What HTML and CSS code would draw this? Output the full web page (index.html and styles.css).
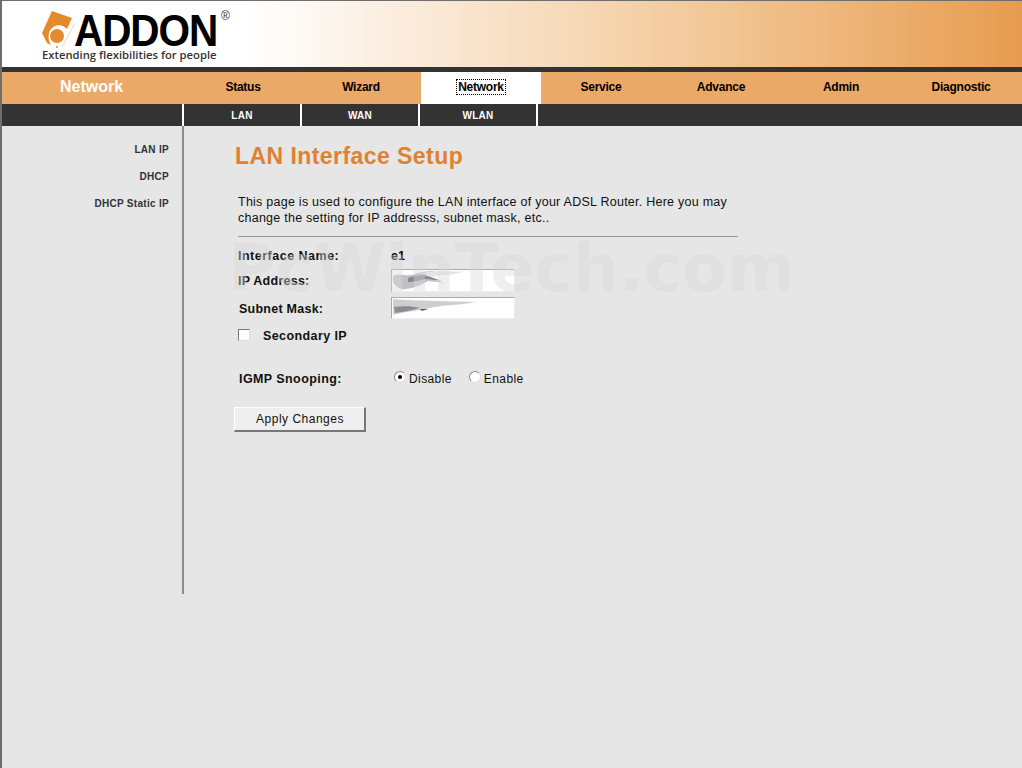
FILE: index.html
```html
<!DOCTYPE html>
<html lang="en">
<head>
<meta charset="utf-8">
<title>LAN Interface Setup</title>
<link rel="stylesheet" href="styles.css">
</head>
<body>
<div class="page">
  <header class="banner">
    <div class="logo">
      <svg class="logo-mark" width="38" height="42" viewBox="40 8 38 42">
        <path d="M52 11 L72 18 L67 29 C62 23 52 24 49 33 C48 38 49 42 51 45 L47 43 L42 33 Z" fill="#e48a2c"/>
        <circle cx="57" cy="36" r="7" fill="#e48a2c"/>
        <circle cx="57" cy="47" r="1" fill="#e48a2c"/>
        <path d="M75 23 L62 47" stroke="#f3c9a0" stroke-width="0.8" fill="none"/>
      </svg>
      <div class="logo-text">
        <div class="brand"><span class="brand-word">ADDON</span></div>
        <div class="tagline">Extending flexibilities for people</div>
      </div>
      <span class="reg">®</span>
    </div>
  </header>
  <div class="rule"></div>
  <nav class="topnav">
    <div class="section-title">Network</div>
    <a class="tab tab-first">Status</a>
    <a class="tab">Wizard</a>
    <a class="tab active"><span class="focus">Network</span></a>
    <a class="tab">Service</a>
    <a class="tab">Advance</a>
    <a class="tab">Admin</a>
    <a class="tab">Diagnostic</a>
  </nav>
  <nav class="subnav">
    <div class="sub-spacer"></div>
    <a class="subtab">LAN</a>
    <a class="subtab">WAN</a>
    <a class="subtab">WLAN</a>
  </nav>
  <div class="body">
    <aside class="sidebar">
      <a class="side-link">LAN IP</a>
      <a class="side-link">DHCP</a>
      <a class="side-link">DHCP Static IP</a>
    </aside>
    <main class="content">
      <h1 class="title">LAN Interface Setup</h1>
      <p class="intro">This page is used to configure the LAN interface of your ADSL Router. Here you may change the setting for IP addresss, subnet mask, etc..</p>
      <hr class="divider">
      <div class="row row-name"><span class="label">Interface Name:</span><span class="value">e1</span></div>
      <div class="row row-ip"><span class="label">IP Address:</span>
        <span class="field field-ip">
          <svg width="122" height="21" viewBox="0 0 122 21"><path d="M1 6 C6 3 12 6 20 5 C28 2 34 1 44 1 C38 3 34 5 30 7 L54 13 L36 11 C30 14 24 18 14 19 C8 20 4 17 1 12 Z" fill="#c2bfc4"/><path d="M16 8 C24 5 30 4 36 6 L50 11 L34 9 C28 10 22 12 16 12 Z" fill="#8b8896"/><path d="M30 3 C44 -1 60 3 72 1 C62 6 48 4 40 7 Z" fill="#e6e4e8"/></svg>
        </span>
      </div>
      <div class="row row-mask"><span class="label">Subnet Mask:</span>
        <span class="field">
          <svg width="122" height="20" viewBox="0 0 122 20"><path d="M1 1 C26 3 60 3 84 4 C70 7 50 7 38 10 C28 13 14 13 1 17 Z" fill="#cfcdd1"/><path d="M2 9 C10 8 20 8 28 10 C20 12 12 14 3 15 Z" fill="#8d8b90"/><path d="M28 11 L36 11 L30 13 Z" fill="#5c5a70"/></svg>
        </span>
      </div>
      <div class="row row-secondary"><span class="check"></span><span class="label">Secondary IP</span></div>
      <div class="row row-igmp">
        <span class="label">IGMP Snooping:</span>
        <span class="radios">
          <span class="radio on"></span><span class="radio-label">Disable</span>
          <span class="radio"></span><span class="radio-label">Enable</span>
        </span>
      </div>
      <button class="apply" type="button">Apply Changes</button>
    </main>
  </div>
  <div class="watermark">PcWinTech.com</div>
</div>
</body>
</html>
```
FILE: styles.css
```css
* { box-sizing: border-box; }
html, body { margin: 0; padding: 0; height: 100%; overflow: hidden; }
body { background: #e6e6e6; font-family: "Liberation Sans", Arial, sans-serif; color: #000; }
.page { position: relative; width: 1022px; height: 768px; border-left: 2px solid #6e6e6e; border-top: 1px solid #6e6e6e; background: #e6e6e6; }
.banner { height: 66px; background: linear-gradient(90deg, #fff 0, #fff 24%, #fbeee0 38%, #f5d4ae 60%, #eeb97f 80%, #e79c50 100%); padding: 8px 0 0 38px; }
.logo { position: relative; height: 54px; }
.logo-mark { position: absolute; left: 0; top: -1px; }
.logo-text { padding-left: 2px; }
.brand { font-size: 45px; line-height: 40px; font-weight: 700; color: #000; padding: 2px 0 0 32px; white-space: nowrap; }
.brand-word { display: inline-block; letter-spacing: -1.2px; transform: scaleX(.9); transform-origin: left center; }
.reg { position: absolute; left: 181px; top: 1px; font-size: 12px; line-height: 12px; color: #333; }
.tagline { font-family: "Open Sans", sans-serif; font-size: 11.25px; line-height: 13px; font-weight: 600; color: #333; margin-top: -3px; }
.rule { height: 5px; background: #333; }
.topnav { display: flex; height: 32px; background: #eaa966; }
.section-title { width: 181px; padding-right: 2px; text-align: center; color: #fff; font-size: 16px; font-weight: 700; line-height: 30px; }
.tab { width: 120px; text-align: center; font-size: 12px; font-weight: 700; line-height: 31px; color: #000; letter-spacing: -.25px; }
.tab-first { width: 118px; padding-left: 2px; }
.tab.active { background: #fff; }
.focus { outline: 1px dotted #000; padding: 0 1px; }
.subnav { display: flex; height: 22px; background: #333; }
.sub-spacer { flex: none; width: 182px; border-right: 2px solid #fff; }
.subtab { width: 118px; flex: none; border-right: 2px solid #fff; text-align: center; color: #fff; font-size: 10px; font-weight: 700; line-height: 23px; letter-spacing: .25px; }
.body { display: flex; align-items: flex-start; }
.sidebar { flex: none; width: 182px; height: 468px; border-right: 2px solid #8c8c8c; padding: 15px 13px 0 0; display: flex; flex-direction: column; }
.side-link { text-align: right; font-size: 10px; font-weight: 700; line-height: 17px; margin-bottom: 10px; color: #333; letter-spacing: .3px; }
.content { padding: 0 0 0 50px; width: 605px; flex: none; }
.title { margin: 17px 0 0 1px; font-size: 23px; line-height: 26px; font-weight: 700; color: #e08130; letter-spacing: .44px; }
.intro { margin: 25px 0 0 4px; width: 500px; font-size: 12.5px; line-height: 16px; color: #111; letter-spacing: .25px; }
.divider { margin: 10px 0 0 4px; border: 0; height: 1px; background: #9b9b9b; width: 500px; }
.row { display: flex; align-items: center; font-size: 12px; }
.label { font-size: 12.5px; font-weight: 700; color: #111; letter-spacing: .25px; padding-top: 2px; }
.row-name { margin: 11px 0 2px 4px; height: 16px; }
.row-name .label { width: 153px; letter-spacing: .5px; padding-top: 0; }
.value { font-weight: 700; font-size: 12.5px; }
.row-ip { height: 28px; margin-left: 4px; }
.row-ip .label { width: 153px; }
.row-mask { height: 28px; margin-left: 5px; }
.row-mask .label { width: 152px; }
.field { display: block; width: 124px; height: 22px; background: #fff; border: 1px solid #aaa; border-right-color: #eee; border-bottom-color: #eee; overflow: hidden; }
.field-ip { height: 23px; }
.field svg { display: block; }
.row-secondary { margin: 5px 0 0 4px; height: 16px; }
.row-secondary .label { letter-spacing: .4px; }
.check { width: 12px; height: 12px; background: #fff; border: 1px solid #777; border-right-color: #ddd; border-bottom-color: #ddd; margin-right: 13px; }
.row-igmp { margin: 27px 0 0 5px; height: 16px; }
.row-igmp .label { width: 155px; letter-spacing: .42px; }
.radios { display: flex; align-items: center; }
.radio { width: 12px; height: 12px; border-radius: 50%; background: #fff; border: 1px solid #888; border-right-color: #ddd; border-bottom-color: #ddd; position: relative; top: -1px; }
.radio.on::after { content: ""; position: absolute; left: 3px; top: 3px; width: 4px; height: 4px; border-radius: 50%; background: #000; }
.radio-label { font-size: 12px; margin-left: 3px; margin-right: 17px; color: #111; letter-spacing: .4px; padding-top: 2px; }
.apply { display: block; margin-top: 21px; width: 132px; height: 25px; background: #efefef; border: 1px solid #fff; border-right: 2px solid #777; border-bottom: 2px solid #777; font-family: "Liberation Sans", Arial, sans-serif; font-size: 12px; color: #111; padding: 0 0 0 1px; letter-spacing: .5px; }
.watermark { position: absolute; left: 226px; top: 233px; font-family: "DejaVu Sans", sans-serif; font-weight: 700; font-size: 65px; line-height: 70px; color: rgba(216, 216, 216, .42); white-space: nowrap; pointer-events: none; }
```
